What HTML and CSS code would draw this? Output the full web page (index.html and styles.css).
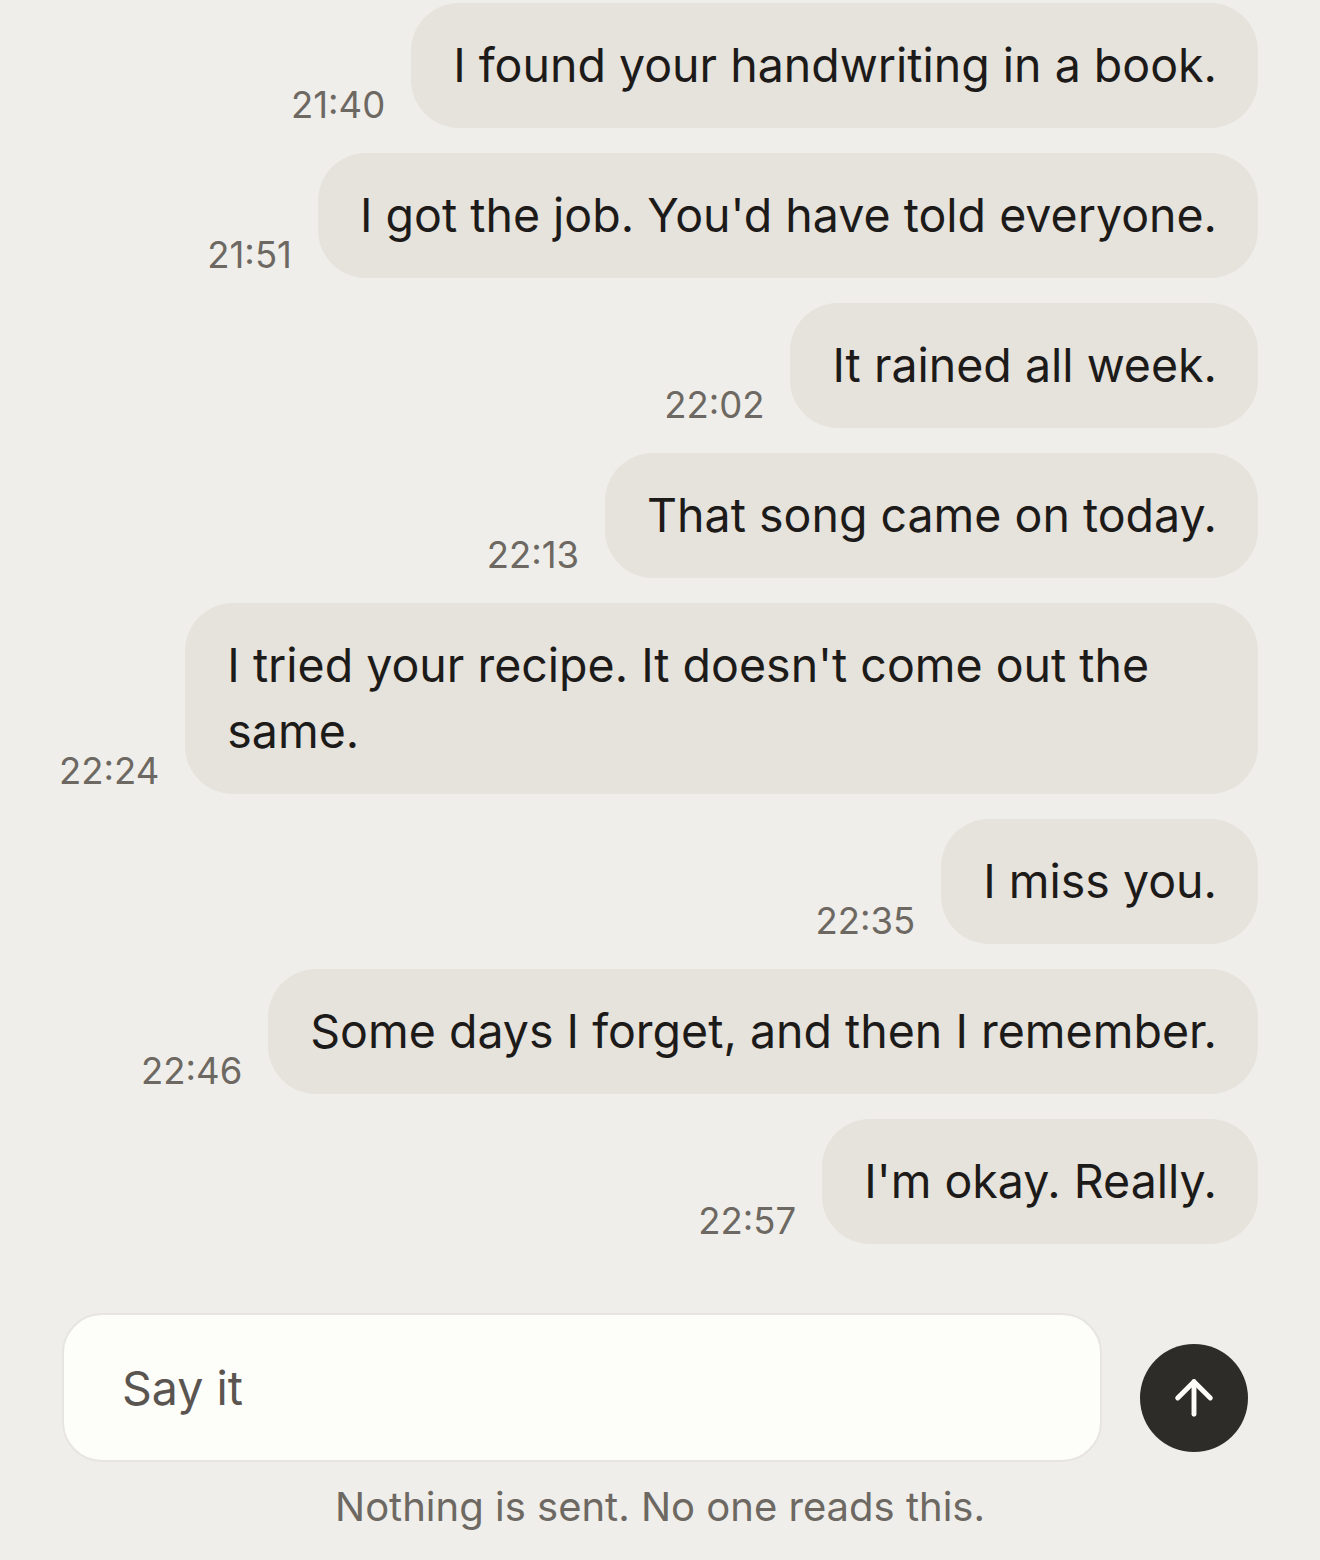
FILE: index.html
```html
<!DOCTYPE html>
<html lang="en">

<head>
    <meta charset="UTF-8">
    <meta name="viewport" content="width=device-width, initial-scale=1.0">
    <title>Say it</title>
    <link rel="stylesheet" href="styles.css">
</head>

<body>
    <div class="chat">
        <!-- messages -->
        <div class="thread">
            <div class="row">
                <span class="time">21:40</span>
                <div class="bubble">I found your handwriting in a book.</div>
            </div>
            <div class="row">
                <span class="time">21:51</span>
                <div class="bubble">I got the job. You'd have told everyone.</div>
            </div>
            <div class="row">
                <span class="time">22:02</span>
                <div class="bubble">It rained all week.</div>
            </div>
            <div class="row">
                <span class="time">22:13</span>
                <div class="bubble">That song came on today.</div>
            </div>
            <div class="row">
                <span class="time">22:24</span>
                <div class="bubble">I tried your recipe. It doesn't come out the same.</div>
            </div>
            <div class="row">
                <span class="time">22:35</span>
                <div class="bubble">I miss you.</div>
            </div>
            <div class="row">
                <span class="time">22:46</span>
                <div class="bubble">Some days I forget, and then I remember.</div>
            </div>
            <div class="row">
                <span class="time">22:57</span>
                <div class="bubble">I'm okay. Really.</div>
            </div>
        </div>

        <!-- composer -->
        <div class="composer">
            <input class="say" type="text" placeholder="Say it">
            <button class="send" aria-label="send">
                <svg width="56" height="56" viewBox="0 0 24 24" fill="none" stroke="#fdfcf8" stroke-width="2.1" stroke-linecap="round" stroke-linejoin="round">
                    <path d="M12 19V5"></path>
                    <path d="M5 12l7-7 7 7"></path>
                </svg>
            </button>
        </div>
        <p class="note">Nothing is sent. No one reads this.</p>
    </div>
</body>

</html>
```

FILE: styles.css
```css
body {
    margin: 0;
    background: #efeeea;
    font-family: Inter, "Liberation Sans", sans-serif;
    color: #1d1b19;
}

.chat {
    padding: 3px 62px 0 62px;
}

.thread {
    display: flex;
    flex-direction: column;
    gap: 25px;
    margin-left: -3px;
}

.row {
    display: flex;
    justify-content: flex-end;
    align-items: flex-end;
    gap: 26px;
}

.time {
    font-size: 36.5px;
    color: #6d6862;
    line-height: 44px;
    margin-bottom: 1px;
    white-space: nowrap;
}

.bubble {
    max-width: 90%;
    box-sizing: border-box;
    background: #e6e2dc;
    border-radius: 48px;
    padding: 29px 41px 30px 42px;
    font-size: 46.5px;
    line-height: 66px;
}

.composer {
    display: flex;
    align-items: flex-end;
    gap: 38px;
    margin-top: 69px;
    padding-right: 10px;
}

.say {
    flex: 1;
    height: 149px;
    box-sizing: border-box;
    border: 2px solid #e7e5e0;
    border-radius: 40px;
    background: #fdfdfa;
    padding: 0 58px;
    font-family: inherit;
    font-size: 46.5px;
    color: #1d1b19;
    outline: none;
}

.say::placeholder {
    color: #5a5550;
}

.send {
    width: 108px;
    height: 108px;
    margin-bottom: 10px;
    border: none;
    border-radius: 50%;
    background: #2e2c28;
    display: flex;
    align-items: center;
    justify-content: center;
    padding: 0;
}

.note {
    margin: 20px 0 0 0;
    text-align: center;
    font-size: 40px;
    color: #6d6862;
}
```
